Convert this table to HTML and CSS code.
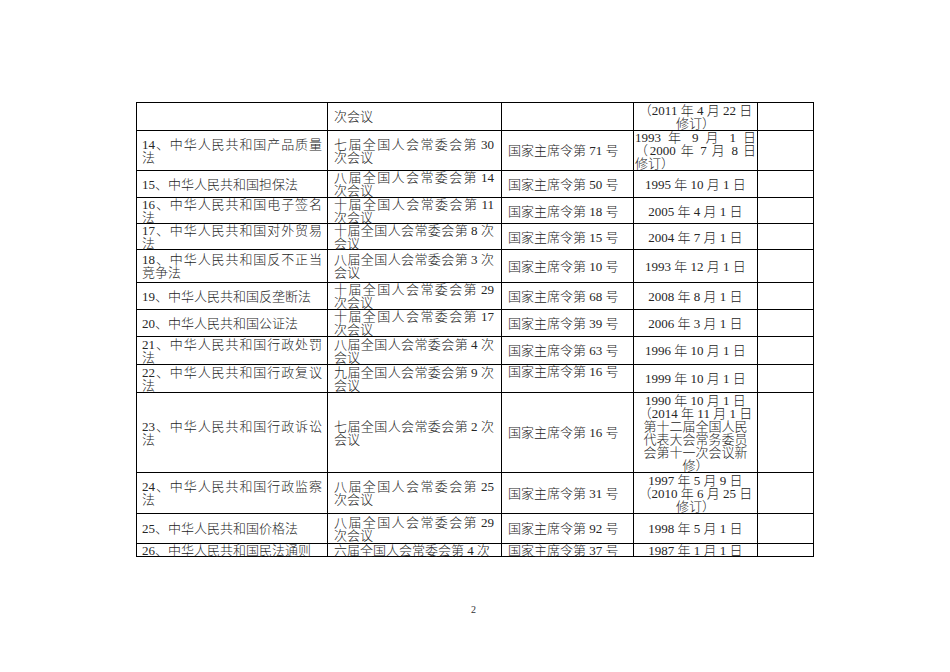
FILE: index.html
```html
<!DOCTYPE html>
<html lang="zh-CN">
<head>
<meta charset="utf-8">
<title>法律法规表</title>
<link rel="stylesheet" href="styles.css">
</head>
<body>
<div class="page">
  <div class="table">
    <div class="row h27 first">
      <div class="cell c1"></div>
      <div class="cell c2"><span class="ln">次会议</span></div>
      <div class="cell c3"></div>
      <div class="cell c4"><span class="ln">（2011 年 4 月 22 日</span><span class="ln">修订）</span></div>
      <div class="cell c5"></div>
    </div>
    <div class="row h40">
      <div class="cell c1"><span class="ln j">14、中华人民共和国产品质量</span><span class="ln">法</span></div>
      <div class="cell c2"><span class="ln j">七届全国人会常委会第<span class="n">30</span></span><span class="ln">次会议</span></div>
      <div class="cell c3"><span class="ln">国家主席令第 71 号</span></div>
      <div class="cell c4 left"><span class="ln j">1993 年 9 月 1 日</span><span class="ln j">（2000 年 7 月 8 日</span><span class="ln">修订）</span></div>
      <div class="cell c5"></div>
    </div>
    <div class="row h27">
      <div class="cell c1"><span class="ln">15、中华人民共和国担保法</span></div>
      <div class="cell c2"><span class="ln j">八届全国人会常委会第<span class="n">14</span></span><span class="ln">次会议</span></div>
      <div class="cell c3"><span class="ln">国家主席令第 50 号</span></div>
      <div class="cell c4"><span class="ln">1995 年 10 月 1 日</span></div>
      <div class="cell c5"></div>
    </div>
    <div class="row h26">
      <div class="cell c1"><span class="ln j">16、中华人民共和国电子签名</span><span class="ln">法</span></div>
      <div class="cell c2"><span class="ln j">十届全国人会常委会第<span class="n">11</span></span><span class="ln">次会议</span></div>
      <div class="cell c3"><span class="ln">国家主席令第 18 号</span></div>
      <div class="cell c4"><span class="ln">2005 年 4 月 1 日</span></div>
      <div class="cell c5"></div>
    </div>
    <div class="row h26">
      <div class="cell c1"><span class="ln j">17、中华人民共和国对外贸易</span><span class="ln">法</span></div>
      <div class="cell c2"><span class="ln j">十届全国人会常委会第<span class="n m">8</span>次</span><span class="ln">会议</span></div>
      <div class="cell c3"><span class="ln">国家主席令第 15 号</span></div>
      <div class="cell c4"><span class="ln">2004 年 7 月 1 日</span></div>
      <div class="cell c5"></div>
    </div>
    <div class="row h33">
      <div class="cell c1"><span class="ln j">18、中华人民共和国反不正当</span><span class="ln">竞争法</span></div>
      <div class="cell c2"><span class="ln j">八届全国人会常委会第<span class="n m">3</span>次</span><span class="ln">会议</span></div>
      <div class="cell c3"><span class="ln">国家主席令第 10 号</span></div>
      <div class="cell c4"><span class="ln">1993 年 12 月 1 日</span></div>
      <div class="cell c5"></div>
    </div>
    <div class="row h27">
      <div class="cell c1"><span class="ln">19、中华人民共和国反垄断法</span></div>
      <div class="cell c2"><span class="ln j">十届全国人会常委会第<span class="n">29</span></span><span class="ln">次会议</span></div>
      <div class="cell c3"><span class="ln">国家主席令第 68 号</span></div>
      <div class="cell c4"><span class="ln">2008 年 8 月 1 日</span></div>
      <div class="cell c5"></div>
    </div>
    <div class="row h27">
      <div class="cell c1"><span class="ln">20、中华人民共和国公证法</span></div>
      <div class="cell c2"><span class="ln j">十届全国人会常委会第<span class="n">17</span></span><span class="ln">次会议</span></div>
      <div class="cell c3"><span class="ln">国家主席令第 39 号</span></div>
      <div class="cell c4"><span class="ln">2006 年 3 月 1 日</span></div>
      <div class="cell c5"></div>
    </div>
    <div class="row h28">
      <div class="cell c1"><span class="ln j">21、中华人民共和国行政处罚</span><span class="ln">法</span></div>
      <div class="cell c2"><span class="ln j">八届全国人会常委会第<span class="n m">4</span>次</span><span class="ln">会议</span></div>
      <div class="cell c3"><span class="ln">国家主席令第 63 号</span></div>
      <div class="cell c4"><span class="ln">1996 年 10 月 1 日</span></div>
      <div class="cell c5"></div>
    </div>
    <div class="row h28">
      <div class="cell c1"><span class="ln j">22、中华人民共和国行政复议</span><span class="ln">法</span></div>
      <div class="cell c2"><span class="ln j">九届全国人会常委会第<span class="n m">9</span>次</span><span class="ln">会议</span></div>
      <div class="cell c3 top"><span class="ln">国家主席令第 16 号</span></div>
      <div class="cell c4"><span class="ln">1999 年 10 月 1 日</span></div>
      <div class="cell c5"></div>
    </div>
    <div class="row h80">
      <div class="cell c1"><span class="ln j">23、中华人民共和国行政诉讼</span><span class="ln">法</span></div>
      <div class="cell c2"><span class="ln j">七届全国人会常委会第<span class="n m">2</span>次</span><span class="ln">会议</span></div>
      <div class="cell c3"><span class="ln">国家主席令第 16 号</span></div>
      <div class="cell c4"><span class="ln">1990 年 10 月 1 日</span><span class="ln">（2014 年 11 月 1 日</span><span class="ln">第十二届全国人民</span><span class="ln">代表大会常务委员</span><span class="ln">会第十一次会议新</span><span class="ln">修）</span></div>
      <div class="cell c5"></div>
    </div>
    <div class="row h41">
      <div class="cell c1"><span class="ln j">24、中华人民共和国行政监察</span><span class="ln">法</span></div>
      <div class="cell c2"><span class="ln j">八届全国人会常委会第<span class="n">25</span></span><span class="ln">次会议</span></div>
      <div class="cell c3"><span class="ln">国家主席令第 31 号</span></div>
      <div class="cell c4"><span class="ln">1997 年 5 月 9 日</span><span class="ln">（2010 年 6 月 25 日</span><span class="ln">修订）</span></div>
      <div class="cell c5"></div>
    </div>
    <div class="row h30">
      <div class="cell c1"><span class="ln">25、中华人民共和国价格法</span></div>
      <div class="cell c2"><span class="ln j">八届全国人会常委会第<span class="n">29</span></span><span class="ln">次会议</span></div>
      <div class="cell c3"><span class="ln">国家主席令第 92 号</span></div>
      <div class="cell c4"><span class="ln">1998 年 5 月 1 日</span></div>
      <div class="cell c5"></div>
    </div>
    <div class="row h13">
      <div class="cell c1"><span class="ln">26、中华人民共和国民法通则</span></div>
      <div class="cell c2"><span class="ln">六届全国人会常委会第 4 次</span></div>
      <div class="cell c3"><span class="ln">国家主席令第 37 号</span></div>
      <div class="cell c4"><span class="ln">1987 年 1 月 1 日</span></div>
      <div class="cell c5"></div>
    </div>
  </div>
  <div class="pageno">2</div>
</div>
</body>
</html>
```
FILE: styles.css
```css
html, body {
  margin: 0;
  padding: 0;
  background: #ffffff;
}

body {
  font-family: "Liberation Serif", "Noto Sans CJK SC", serif;
  font-size: 13px;
  line-height: 13px;
  font-weight: 300;
  color: #262626;
}

.page {
  width: 950px;
  height: 672px;
  box-sizing: border-box;
  padding: 102px 0 0 136px;
  position: relative;
}

.table {
  width: 678px;
  box-sizing: border-box;
  border: 1px solid #000;
}

.row {
  display: grid;
  grid-template-columns: 190px 174px 132px 124px 56px;
  box-sizing: border-box;
  border-top: 1px solid #000;
}

.row.first {
  border-top: none;
}

.h13 { height: 13px; }
.h26 { height: 26px; }
.h27 { height: 27px; }
.h28 { height: 28px; }
.h30 { height: 30px; }
.h33 { height: 33px; }
.h40 { height: 40px; }
.h41 { height: 41px; }
.h80 { height: 80px; }

.cell {
  box-sizing: border-box;
  border-left: 1px solid #000;
  display: flex;
  flex-direction: column;
  justify-content: center;
  min-width: 0;
  overflow: visible;
}

.c1 {
  border-left: none;
  padding: 0 5px 0 5px;
}

.c2 {
  padding: 0 7px 0 6px;
}

.c3 {
  padding: 0 4px 0 6px;
}

.c4 {
  padding: 0 1px;
  text-align: center;
}

.c4.left {
  text-align: left;
}

.top {
  justify-content: flex-start;
}

.ln {
  display: block;
  white-space: nowrap;
  height: 13px;
  line-height: 13px;
}

.ln.j {
  text-align: justify;
  text-align-last: justify;
}

.n {
  margin-left: 3px;
}

.n.m {
  margin-right: 3px;
}

.pageno {
  position: absolute;
  left: 471px;
  top: 604px;
  font-size: 10px;
  line-height: 12px;
  color: #333;
}
```
